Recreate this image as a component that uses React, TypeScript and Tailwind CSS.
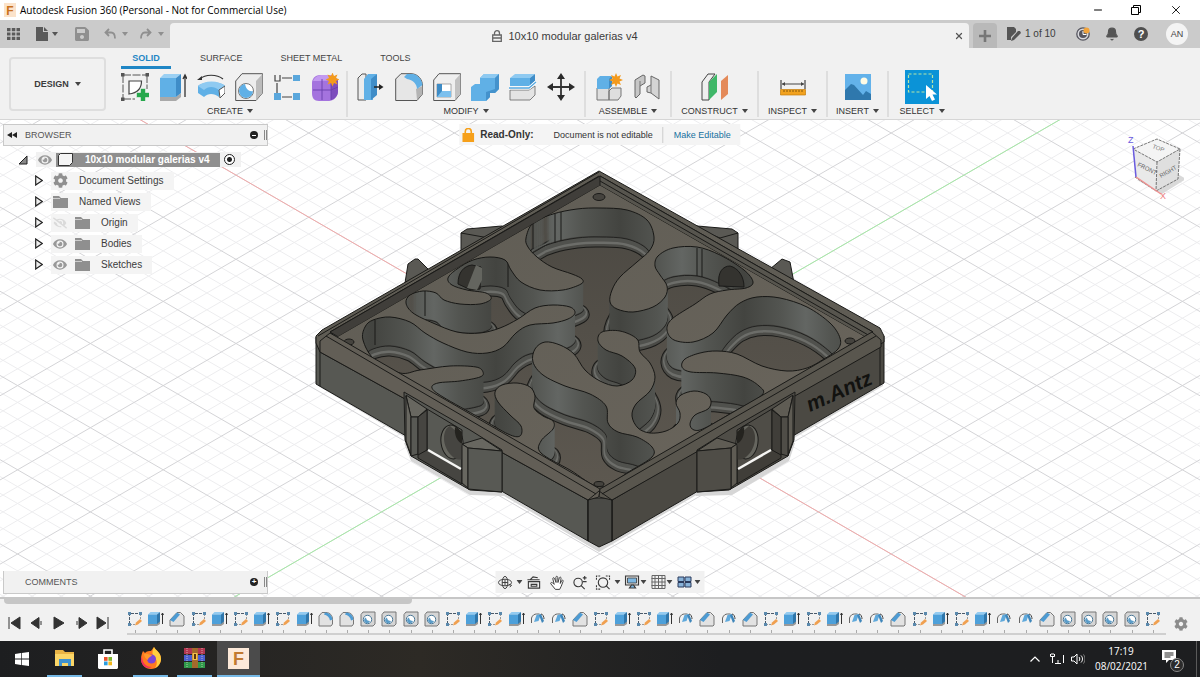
import React from "react";
import { Bell, Minus, X } from "lucide-react";
import { FaCog, FaEye, FaEyeSlash, FaSave } from "react-icons/fa";

type Pt = [number, number];

/* ---------- shared bits ---------- */

function Caret({ className = "text-[#444]" }: { className?: string }) {
  return (
    <svg viewBox="0 0 6 4" className={`h-1 w-1.5 shrink-0 ${className}`} aria-hidden="true">
      <path d="M0 0h6L3 4z" fill="currentColor" />
    </svg>
  );
}

function Art({ children }: { children: React.ReactNode }) {
  return (
    <svg viewBox="0 0 28 28" className="block size-7 shrink-0" aria-hidden="true">
      {children}
    </svg>
  );
}

const star = "M0-7L1.5-3.4 5-5 3.5-1.5 7 0 3.5 1.5 5 5 1.5 3.5 0 7-1.5 3.5-5 5-3.5 1.5-7 0-3.5-1.5-5-5-1.5-3.4z";

/* ---------- ribbon icons ---------- */

const SketchIcon = () => (
  <Art>
    <path d="M2 2h24M2 2v24M26 2v14M2 26h12" stroke="#555" strokeWidth="1" fill="none" strokeDasharray="8 1.5" />
    <path d="M8 8h12.5c0 7-4 12-12.500 13z" stroke="#444" strokeWidth="1.2" fill="#fff" />
    <path d="M0 0h3.500v3.500H0zM24.500 0H28v3.500h-3.500zM0 24.500h3.500V28H0z" fill="#555" />
    <path d="M19.500 15.500h5v4h4v5h-4v4h-5v-4h-4v-5h4z" fill="#27a84d" stroke="#f1f1f1" strokeWidth=".6" />
  </Art>
);
const ExtrudeIcon = () => (
  <Art>
    <path d="M1 24h16l5-4v4l-5 4H1z" fill="#a9a9a9" />
    <path d="M1 5l4-4h17l-5 4z" fill="#9bd0f3" />
    <path d="M1 5h16v19H1z" fill="#60b0e6" />
    <path d="M17 5l5-4v19l-5 4z" fill="#3f8dc8" />
    <path d="M26 24V3M24 6l2-4 2 4" stroke="#333" strokeWidth="1.3" fill="none" />
  </Art>
);
const RevolveIcon = () => (
  <Art>
    <path d="M1 13c3-4 22-6 27 0l-6 4v7c-5-4-11-4-15 0l-6-4z" fill="#60b0e6" />
    <path d="M1 13c6-6 21-6 27 0l-6 4c-5-4-11-4-15 0z" fill="#8fcaf1" />
    <path d="M22 17l6-4v7l-5 5z" fill="#fff" stroke="#555" />
    <path d="M3 6C8 1 20 1 26 6" stroke="#333" strokeWidth="1.2" fill="none" />
    <path d="M0 7l5-4v4z" fill="#333" />
  </Art>
);
const HoleIcon = () => (
  <Art>
    <path d="M.7 8L7 .7h20.500V20L21 27.500H.7z" fill="#ededed" stroke="#555" />
    <path d="M21 8l6.500-7V20L21 27.300z" fill="#bcbcbc" />
    <circle cx="11" cy="18" r="7.5" fill="#fff" stroke="#777" />
    <path d="M10 11a7 7 0 1 0 8 7c-4 1-7-2-8-7z" fill="#60b0e6" />
  </Art>
);
const PatternIcon = () => (
  <Art>
    <path d="M9 5h10M4 10v10M9 24h10" stroke="#444" strokeWidth="1.2" />
    <path d="M2 2v6h5V2" fill="none" stroke="#444" strokeWidth="1.2" />
    <path d="M20 2h7v6h-7zM1 20h7v7H1zM20 20h7v7h-7z" fill="#5aa7dc" />
  </Art>
);
const FormIcon = () => (
  <Art>
    <path d="M1 10c0-4 3-8 8-8h10c5 0 8 4 8 8v8c0 6-5 10-9 10H8c-5 0-7-3-7-8z" fill="#a473de" />
    <path d="M2 8c2-5 6-6 10-6h6c3 0 5 2 6 3-3 3-14 3-22 3z" fill="#c39af0" />
    <path d="M20 8c4 0 7-2 7-1v11c0 5-3 8-7 9z" fill="#7d4dbd" />
    <path d="M11 6v21M2 17h18l7-3M20 7v20" stroke="#6a3eab" strokeWidth=".9" fill="none" />
    <path d={star} transform="translate(21.5 6.5)" fill="#f39a1d" />
  </Art>
);
const PressPullIcon = () => (
  <Art>
    <path d="M1 5l4-4h4v26H1z" fill="#ececec" stroke="#555" />
    <path d="M7 6l4-5h9l-4 5v21H7z" fill="#60b0e6" />
    <path d="M14 6l6-5v21l-6 5z" fill="#3f8dc8" />
    <path d="M17 14h8" stroke="#222" strokeWidth="1.5" />
    <path d="M22 11l4.500 3-4.500 3z" fill="#222" />
  </Art>
);
const FilletIcon = () => (
  <Art>
    <path d="M.7 6L6 .7h10c7 0 11.500 6 11.500 12V21L22 27.500H.7z" fill="#e6e6e6" stroke="#555" />
    <path d="M21 16l6.500-3v8L22 27z" fill="#b3b3b3" />
    <path d="M12 1h5c6 0 10 6 10.500 11L22 16c0-5-4-9-10-10l-3-2z" fill="#60b0e6" />
  </Art>
);
const ShellIcon = () => (
  <Art>
    <path d="M.7 7L6 .7h21.500V21L22 27.500H.7z" fill="#efefef" stroke="#555" />
    <path d="M22 7l5.500-6v20L22 27z" fill="#c2c2c2" />
    <path d="M4 11h14v13H4z" fill="#fff" stroke="#888" strokeWidth=".7" />
    <path d="M4 11h5v13H4z" fill="#3d8bc5" />
    <path d="M9 18h9v6H4z" fill="#7cc0ee" />
  </Art>
);
const CombineIcon = () => (
  <Art>
    <path d="M9 5l4-4h15v15l-4 4h-5v4l-4 4H0V14l4-3h5z" fill="#60b0e6" />
    <path d="M9 5l4-4h15l-4 4z" fill="#8fcaf1" />
    <path d="M24 5l4-4v15l-4 4h-5v4l-4 4V19l9-3z" fill="#4492cc" />
  </Art>
);
const SplitIcon = () => (
  <Art>
    <path d="M1 17h19l6-4v9l-5 5H1z" fill="#e4e4e4" stroke="#666" strokeWidth=".8" />
    <path d="M1 5l5-4h20l-5 4z" fill="#8fcaf1" />
    <path d="M1 5h20v8H1z" fill="#60b0e6" />
    <path d="M21 5l5-4v7l-5 5z" fill="#3f8dc8" />
    <path d="M0 15h20l7-6" stroke="#fff" strokeWidth="3" fill="none" />
    <path d="M0 15h20l7-6" stroke="#55a8df" strokeWidth="1.3" fill="none" />
  </Art>
);
const MoveIcon = () => (
  <Art>
    <path d="M14 3v22M3 14h22" stroke="#333" strokeWidth="1.8" />
    <path d="M14 0l4 6h-8zM14 28l4-6h-8zM0 14l6-4v8zM28 14l-6-4v8z" fill="#2b2b2b" />
  </Art>
);
const ComponentIcon = () => (
  <Art>
    <path d="M2 15h12v12H2zM14 18l3-3h9v8l-3 4h-9z" fill="#dedede" stroke="#777" />
    <path d="M2 6l3-3h11v10l-3 3H2z" fill="#60b0e6" />
    <path d="M14 6l3-3v10l-3 3z" fill="#3f8dc8" />
    <path d={star} transform="translate(21 7)" fill="#f39a1d" />
  </Art>
);
const JointIcon = () => (
  <Art>
    <path d="M2 7l8-5 2 1v7l-5 3v8l-4 4-1-1z" fill="#c6c6c6" stroke="#666" />
    <path d="M26 7l-8-4v9l-4 2v5l4 1 8 6z" fill="#d4d4d4" stroke="#666" />
    <path d="M18 12v8M7 8v5" stroke="#777" />
  </Art>
);
const ConstructIcon = () => (
  <Art>
    <path d="M1 9l6-8h7l-6 8v18H1z" fill="#efefef" stroke="#444" />
    <path d="M8 9l8-8v18l-8 8z" fill="#3fb768" />
    <path d="M20 8l7-6v19l-7 6z" fill="#e48a59" />
  </Art>
);
const InspectIcon = () => (
  <Art>
    <path d="M2 7v9M26 7v9M3 11h22" stroke="#444" strokeWidth="1.2" />
    <path d="M6 9l-3 2 3 2zM22 9l3 2-3 2z" fill="#444" />
    <path d="M1.500 16.500h25V22h-25z" fill="#f2a21f" stroke="#c47d0c" strokeWidth=".7" />
    <path d="M5 17v2M8 17v2M11 17v2M14 17v2M17 17v2M20 17v2M23 17v2" stroke="#6b4405" strokeWidth=".8" />
  </Art>
);
const InsertIcon = () => (
  <Art>
    <path d="M1 1h26v26H1z" fill="#63b2ea" />
    <path d="M1 17l6-6 3 1 9 10 3-4 5 3v6H1z" fill="#2f78ad" />
    <circle cx="20" cy="8" r="3.5" fill="#fffbe5" />
  </Art>
);
const SelectIcon = () => (
  <svg viewBox="0 0 34 34" className="block size-[34px] shrink-0" aria-hidden="true">
    <path d="M0 0h34v34H0z" fill="#0b93d7" />
    <path d="M3.500 4h24v18h-24z" fill="none" stroke="#b7e5a5" strokeWidth="1.2" strokeDasharray="3 2" />
    <path d="M21 15v14l3.500-3 2.500 5 3-1.500-2.500-5H32z" fill="#fff" />
  </svg>
);

interface Group {
  label: string;
  box: string;
  icons: [string, () => React.ReactElement][];
}

const groups: Group[] = [
  {
    label: "CREATE",
    box: "w-[227px] border-r-2 pr-[7px]",
    icons: [
      ["Create Sketch", SketchIcon],
      ["Extrude", ExtrudeIcon],
      ["Revolve", RevolveIcon],
      ["Hole", HoleIcon],
      ["Rectangular Pattern", PatternIcon],
      ["Create Form", FormIcon],
    ],
  },
  {
    label: "MODIFY",
    box: "w-[238px] border-r-2",
    icons: [
      ["Press Pull", PressPullIcon],
      ["Fillet", FilletIcon],
      ["Shell", ShellIcon],
      ["Combine", CombineIcon],
      ["Split Body", SplitIcon],
      ["Move", MoveIcon],
    ],
  },
  {
    label: "ASSEMBLE",
    box: "w-[86px] border-r-2",
    icons: [
      ["New Component", ComponentIcon],
      ["Joint", JointIcon],
    ],
  },
  { label: "CONSTRUCT", box: "w-[87px] border-r-2", icons: [["Offset Plane", ConstructIcon]] },
  { label: "INSPECT", box: "w-[69px] border-r-2", icons: [["Measure", InspectIcon]] },
  { label: "INSERT", box: "w-[61px] border-r-2", icons: [["Insert Image", InsertIcon]] },
  { label: "SELECT", box: "w-[66px]", icons: [["Select", SelectIcon]] },
];

/* ---------- header ---------- */

function TitleBar() {
  return (
    <div className="flex h-5 items-center bg-white pl-1 text-black">
      <svg viewBox="0 0 12 14" className="mr-1 h-3.5 w-3" aria-hidden="true">
        <path d="M0 0h12v14H0z" fill="#fbe3cb" />
        <text x="6" y="11.5" textAnchor="middle" fontFamily="Liberation Sans, sans-serif" fontWeight="700" fontSize="12" fill="#c9701b">F</text>
      </svg>
      <h1 className="flex-1 font-['Open_Sans',sans-serif] text-[10px] leading-5">
        Autodesk Fusion 360 (Personal - Not for Commercial Use)
      </h1>
      <button type="button" aria-label="Minimize" className="flex h-5 w-10 items-center justify-center">
        <Minus className="size-3" strokeWidth={2} />
      </button>
      <button type="button" aria-label="Restore" className="flex h-5 w-9 items-center justify-center">
        <svg viewBox="0 0 10 10" className="size-2.5" fill="none" stroke="#000">
          <path d="M.5 2.500h7v7h-7zM2.500 2V.5h7v7H8" />
        </svg>
      </button>
      <button type="button" aria-label="Close" className="mr-0.5 flex h-5 w-11 items-center justify-center">
        <X className="size-3.5" strokeWidth={1.5} />
      </button>
    </div>
  );
}

function TabBar() {
  return (
    <div className="flex h-7 bg-[#cbcbcb] text-[#555]">
      <div className="flex w-[170px] items-center pl-[7px]">
        <button type="button" aria-label="Show data panel">
          <svg viewBox="0 0 13 12" className="h-3 w-[13px]" fill="#5a5a5a">
            <path d="M0 0h3.500v3.200H0zM4.800 0h3.500v3.200H4.800zM9.500 0H13v3.200H9.500zM0 4.400h3.500v3.200H0zM4.800 4.400h3.500v3.200H4.800zM9.500 4.400H13v3.200H9.500zM0 8.800h3.500V12H0zM4.800 8.800h3.500V12H4.800zM9.500 8.800H13V12H9.500z" />
          </svg>
        </button>
        <button type="button" aria-label="File" className="ml-4 flex items-center gap-1">
          <svg viewBox="0 0 12 14" className="h-3.5 w-3" fill="#5a5a5a">
            <path d="M0 0h7v5h5v9H0zM8 0l4 4H8z" />
          </svg>
          <Caret className="text-[#555]" />
        </button>
        <button type="button" aria-label="Save" className="ml-4 text-[#8f8f8f]">
          <FaSave className="size-4" />
        </button>
        <button type="button" aria-label="Undo" className="ml-3.5 flex items-center gap-1.5 text-[#8f8f8f]">
          <svg viewBox="0 0 12 12" className="size-3" fill="none" stroke="currentColor" strokeWidth="1.8">
            <path d="M5 1L1.500 4.500 5 8M2 4.500h5c3 0 4 3 4 6" />
          </svg>
          <Caret className="text-[#8f8f8f]" />
        </button>
        <button type="button" aria-label="Redo" className="ml-3 flex items-center gap-1.5 text-[#8f8f8f]">
          <svg viewBox="0 0 12 12" className="size-3" fill="none" stroke="currentColor" strokeWidth="1.8">
            <path d="M7 1l3.500 3.500L7 8M10 4.500H5c-3 0-4 3-4 6" />
          </svg>
          <Caret className="text-[#8f8f8f]" />
        </button>
      </div>
      <div className="mt-[3px] flex min-w-0 flex-1 items-center rounded-t bg-[#f1f1f1]">
        <div className="flex flex-1 items-center justify-center gap-1.5 pl-1.5 text-[11px] leading-4 text-[#3c3c3c]">
          <svg viewBox="0 0 10 12" className="h-3 w-2.5" fill="none" stroke="#666" strokeWidth="1.3">
            <path d="M2.500 5V3.200a2.500 2.500 0 0 1 5 0V5M.7 5h8.600v6.300H.7zM1 8h8" />
          </svg>
          10x10 modular galerias v4
        </div>
        <button type="button" aria-label="Close document" className="mr-[5px] text-[#555]">
          <X className="size-2.5" strokeWidth={3} />
        </button>
      </div>
      <div className="flex w-[231px] items-center">
        <button type="button" aria-label="New design" className="mt-[3px] ml-1 flex h-[25px] w-6 items-center justify-center rounded-t bg-[#b9b9b9]">
          <svg viewBox="0 0 12 12" className="size-3" fill="#777">
            <path d="M4.700 0h2.600v4.700H12v2.600H7.300V12H4.700V7.300H0V4.700h4.700z" />
          </svg>
        </button>
        <button type="button" className="ml-2.5 flex items-center gap-1 text-[10px] leading-4 text-[#3c3c3c]">
          <svg viewBox="0 0 14 14" className="size-3.5" fill="#555">
            <path d="M0 0h7l2 2v3L4 10v3H0zM13 4l1 2-7 7-3 1 1-3 6-7z" />
          </svg>
          1 of 10
        </button>
        <div className="ml-auto flex items-center pr-3">
          <button type="button" aria-label="Job status" className="mr-[15px]">
            <svg viewBox="0 0 14 14" className="size-3.5">
              <circle cx="7" cy="7" r="6.2" fill="#d8d8dc" stroke="#55555f" strokeWidth="1.3" />
              <circle cx="7" cy="7" r="4" fill="#55555f" />
              <path d="M7 4v3.500h3.500" stroke="#fff" fill="none" />
              <circle cx="10.5" cy="3.5" r="3" fill="#f2a33a" />
            </svg>
          </button>
          <button type="button" aria-label="Notifications" className="mr-[15px] text-[#555]">
            <Bell className="size-3.5" fill="currentColor" strokeWidth={2} />
          </button>
          <button type="button" aria-label="Help" className="mr-[18px] flex size-3.5 items-center justify-center rounded-full bg-[#4f4f4f] text-[11px] leading-none font-bold text-white">
            ?
          </button>
          <button type="button" aria-label="Account AN" className="flex size-[22px] items-center justify-center rounded-full bg-[#f4f4f4] text-[9px] leading-none text-[#444]">
            AN
          </button>
        </div>
      </div>
    </div>
  );
}

function Ribbon() {
  return (
    <div className="flex h-[72px] border-b border-[#d6d6d6] bg-[#f1f1f1]">
      <button
        type="button"
        className="mt-[9px] ml-[9px] flex h-[54px] w-[97px] items-center justify-center gap-1.5 rounded-sm border-2 border-[#dedede] text-[9px] leading-3 font-bold text-[#3c3c3c]"
      >
        DESIGN <Caret />
      </button>
      <div className="ml-[15px] flex flex-col">
        <nav className="flex h-[21px] items-end text-[9px] leading-4 text-[#444]">
          <a href="#solid" className="mr-2.5 w-[50px] border-b-[3px] border-[#1f86c5] text-center font-bold text-[#1f86c5]">SOLID</a>
          <a href="#surface" className="px-[19px] pb-[3px]">SURFACE</a>
          <a href="#sheet-metal" className="px-[19px] pb-[3px]">SHEET METAL</a>
          <a href="#tools" className="px-[19px] pb-[3px]">TOOLS</a>
        </nav>
        <div className="mt-0.5 flex h-[46px]">
          {groups.map((g) => (
            <section key={g.label} className={`flex flex-col items-center justify-between border-[#dedede] ${g.box}`}>
              <div className="flex h-8 items-center gap-2.5">
                {g.icons.map(([name, Icon]) => (
                  <button key={name} type="button" aria-label={name}>
                    <Icon />
                  </button>
                ))}
              </div>
              <button type="button" className="flex items-center gap-1 text-[9px] leading-3 text-[#333]">
                {g.label} <Caret />
              </button>
            </section>
          ))}
        </div>
      </div>
    </div>
  );
}

/* ---------- viewport ---------- */

const range = (n: number) => Array.from({ length: n }, (_, i) => i);

/* Closed Catmull-Rom curve through the points. */
function smooth(p: Pt[]): string {
  const n = p.length;
  let d = `M${p[0][0]} ${p[0][1]}`;
  for (let i = 0; i < n; i++) {
    const a = p[(i + n - 1) % n];
    const b = p[i];
    const c = p[(i + 1) % n];
    const e = p[(i + 2) % n];
    d += `C${b[0] + (c[0] - a[0]) / 6} ${b[1] + (c[1] - a[1]) / 6} ${c[0] - (e[0] - b[0]) / 6} ${c[1] - (e[1] - b[1]) / 6} ${c[0]} ${c[1]}`;
  }
  return d + "Z";
}

const cavity: Pt[] = [
  [526, 238], [533, 223], [553, 214], [577, 209], [600, 208], [627, 210], [647, 220], [654, 237], [650, 250],
  [637, 262], [620, 277], [612, 290], [610, 302], [617, 309], [633, 312], [653, 307], [665, 297], [667, 286],
  [660, 275], [655, 266], [658, 256], [673, 248], [697, 247], [720, 255], [744, 270], [753, 282], [746, 288],
  [727, 290], [710, 294], [695, 304], [672, 319], [667, 330], [674, 340], [693, 342], [713, 333], [727, 315],
  [740, 303], [757, 297], [780, 298], [807, 307], [830, 323], [840, 338], [838, 349], [824, 359], [807, 368],
  [787, 371], [762, 366], [737, 354], [717, 351], [700, 353], [685, 359], [682, 367], [691, 372], [717, 373],
  [743, 377], [759, 386], [762, 395], [735, 411], [705, 428], [694, 430], [690, 424], [695, 415], [708, 409],
  [711, 401], [706, 394], [694, 391], [681, 395], [676, 403], [680, 413], [678, 423], [666, 431], [650, 433],
  [638, 428], [632, 416], [636, 404], [650, 391], [655, 377], [650, 363], [640, 352], [637, 339], [620, 331],
  [602, 332], [598, 341], [606, 350], [622, 356], [635, 368], [632, 380], [617, 386], [600, 381], [585, 370],
  [574, 354], [560, 345], [545, 342], [535, 349], [533, 362], [543, 375], [565, 386], [590, 394], [606, 406],
  [608, 423], [618, 432], [637, 437], [652, 447], [652, 457], [630, 471], [601, 487], [570, 470], [541, 453],
  [541, 441], [553, 429], [553, 421], [543, 416], [534, 408], [535, 396], [530, 387], [517, 383], [502, 385],
  [495, 392], [498, 402], [510, 415], [521, 426], [520, 436], [508, 434], [480, 418], [443, 397], [432, 388],
  [438, 383], [460, 381], [480, 377], [483, 372], [476, 367], [450, 366], [420, 370], [400, 373], [374, 359],
  [363, 340], [365, 327], [373, 320], [390, 317], [410, 322], [425, 333], [443, 343], [467, 352], [487, 353],
  [503, 347], [516, 333], [530, 325], [553, 323], [568, 319], [575, 313], [570, 307], [553, 305], [535, 308],
  [518, 319], [500, 328], [480, 333], [457, 332], [433, 323], [413, 313], [406, 303], [410, 295], [423, 291],
  [436, 293], [444, 300], [460, 304], [480, 304], [491, 299], [486, 293], [467, 290], [452, 285], [448, 278],
  [457, 269], [473, 260], [490, 257], [505, 260], [511, 270], [521, 282], [540, 290], [563, 290], [581, 284],
  [582, 279], [572, 274], [552, 267], [537, 257], [528, 247],
];

const plate = `M600 185L335 338 600 491 866 337Z${smooth(cavity)}`;

function Grid() {
  const at = range(121).map((i) => i - 60);
  return (
    <g fill="none">
      {[false, true].map((major) => (
        <g key={String(major)} stroke={major ? "#d4d4d7" : "#ededef"}>
          {at
            .filter((k) => (k % 5 === 0) === major)
            .map((k) => {
              const x = 600 + k * 29.12;
              return <path key={k} d={`M${x - 728} ${385.6 + 421}L${x + 728} ${385.6 - 421}M${x - 728} ${385.6 - 421}L${x + 728} ${385.6 + 421}`} />;
            })}
        </g>
      ))}
      <path d="M-128 -35.400L1328 806.600" stroke="#f2aaaa" />
      <path d="M-128 806.600L1328 -35.400" stroke="#a6eaa6" />
    </g>
  );
}

/* Connector on a front wall, drawn for the left side. */
function Connector({ light, mid, dark }: { light: string; mid: string; dark: string }) {
  return (
    <g stroke="#1b1b19" strokeLinejoin="round">
      <path d="M404 392L405 440 411 456 463 486 470 490 502 492V450L470 430z" fill={mid} />
      <path d="M427 409L462 430V470L427 450z" fill={mid} />
      <ellipse cx="452" cy="442" rx="11" ry="17" fill="#66665f" transform="rotate(-8 452 442)" />
      <path d="M450 426c-8 3-9 21 3 31 4 3 7 3 9 2v-12l-4-14z" fill={dark} stroke="none" />
      <path d="M455 427l7 5v12c-5-3-8-9-7-17z" fill="#24231f" stroke="none" />
      <path d="M427 450l35 20v14l-44-26v-6z" fill={dark} />
      <path d="M428 450l33 19" stroke="#f6f6f4" strokeWidth="2.5" />
      <path d="M406 395l21 14-9 8h-7z" fill={light} />
      <path d="M406 396l5 21v38l-5-14z" fill={light} />
      <path d="M411 417h7v37l-7 2z" fill={mid} />
      <path d="M418 417l9-7v40l-9 5z" fill={dark} />
      <path d="M462 444l20-6 20 13-34-3z" fill={light} />
      <path d="M462 444l6 4v40l-6-5z" fill={light} />
      <path d="M468 448l34 3v41l-34-3z" fill={mid} />
    </g>
  );
}

function Model() {
  return (
    <g>
      <defs>
        <path id="plate" d={plate} fillRule="evenodd" />
        <clipPath id="inside">
          <path d="M600 185L335 338 600 491 866 337Z" />
        </clipPath>
        <linearGradient id="wall" gradientUnits="userSpaceOnUse" x1="0" y1="0" x2="62" y2="0" spreadMethod="reflect">
          <stop offset="0" stopColor="#434440" />
          <stop offset=".6" stopColor="#535551" />
          <stop offset="1" stopColor="#636663" />
        </linearGradient>
        <linearGradient id="floor" x1="0" y1="0" x2="0" y2="1">
          <stop offset="0" stopColor="#4a4741" />
          <stop offset="1" stopColor="#5d5850" />
        </linearGradient>
        <linearGradient id="top" x1="0" y1="0" x2="1" y2="1">
          <stop offset="0" stopColor="#5f5c54" />
          <stop offset="1" stopColor="#6a655c" />
        </linearGradient>
      </defs>
      <path d="M318 386L599 552 883 386V380H318z" fill="#d6d6d6" />
      <path d="M404 443l7 18 59 34 36 1 12-20H690l6 20 36-1 57-34 6-18z" fill="#d6d6d6" />

      <g fill="#5a5954" stroke="#1b1b19" strokeLinejoin="round">
        <path d="M461 252V233l6-4 35-3 10 4-40 30z" />
        <path d="M461 233l28 5 23-10" fill="none" />
        <path d="M405 283l3-19 7-5h3l14 14-20 16z" />
        <path d="M738 252V233l-6-4-35-3-10 4 40 30z" />
        <path d="M738 233l-18 5-28-11" fill="none" />
        <path d="M794 283l-4-21-8-3-12 10 12 14z" />
      </g>

      {/* outer block */}
      <g stroke="#1b1b19" strokeLinejoin="round">
        <path d="M316 337V384L588 541V500z" fill="#575853" />
        <path d="M884 336V383L612 541V500z" fill="#4b4943" />
        <path d="M588 498V541L599 547 612 541V498z" fill="#4a4a46" />
        <path d="M320 343v43M880 342v43" fill="none" />
        <path d="M599 171L880 328l4 8v6L612 500l-13-5-11 5L320 352l-4-9v-7l6-6z" fill="#5f5c54" />
        <path d="M599 172L318 336M599 176L330 332l5 5" fill="none" />
        <path d="M330 332L600 176 873 332 600 491z" fill="#403e3a" />
        <path d="M600 176L873 332l-7 6L600 186z" fill="#57554e" />
        <path d="M600 181L870 336" fill="none" />
      </g>

      {/* interior */}
      <g clipPath="url(#inside)">
        <path d="M600 185L335 338 600 491 866 337Z" fill="url(#floor)" />
        <g strokeLinejoin="round">
          <use href="#plate" y="33" fill="#4a4a46" stroke="#1b1b19" strokeWidth="13" />
          <use href="#plate" y="33" fill="#4a4a46" stroke="#4b4b47" strokeWidth="11" />
          <use href="#plate" y="32" fill="#4a4a46" stroke="#6c6d69" strokeWidth="8" />
          <use href="#plate" y="31" fill="#4a4a46" stroke="#50514d" strokeWidth="5" />
        </g>
        <use href="#plate" y="29" fill="#41413e" stroke="#232321" />
        {range(28).map((i) => (
          <use key={i} href="#plate" y={28 - i} fill="url(#wall)" />
        ))}
        <g stroke="#1b1b19" fill="none">
          <path d="M533 223v26M555 214v29M561 212v29M375 320v25M425 291v25M508 262v25M697 248v28M702 249v28" />
        </g>
        <path d="M458 284c0-12 6-18 14-19l9 2-1 22-9 1z" fill="#34332f" stroke="#1b1b19" />
        <path d="M467 288l9-23 6 3v12l-5 10z" fill="#64655f" />
        <path d="M719 286c-2-14 4-20 11-20 8 2 14 10 14 21z" fill="#34332f" stroke="#1b1b19" />
        <use href="#plate" fill="url(#top)" stroke="#181816" />
      </g>
      <g fill="#45433e" stroke="#1b1b19">
        <ellipse cx="599" cy="197" rx="6" ry="3.5" />
        <ellipse cx="349" cy="342" rx="5" ry="3" />
        <ellipse cx="850" cy="341" rx="5" ry="3" />
        <ellipse cx="599" cy="484" rx="5" ry="2.5" />
      </g>

      {/* front rim */}
      <g stroke="#1b1b19" strokeLinejoin="round">
        <path d="M320 341l10-8L600 489l-1 8-11 3L320 352z" fill="#625e56" />
        <path d="M881 340l-9-8L600 489l-1 8 13 3L881 347z" fill="#59564e" />
        <path d="M326 336L596 494M876 336L602 494M588 500l11-9 13 9M588 500v41M612 500v41" fill="none" />
      </g>

      <Connector light="#686760" mid="#585954" dark="#464541" />
      <g transform="translate(1199 0) scale(-1 1)">
        <Connector light="#5f5c54" mid="#4f4d47" dark="#403e39" />
      </g>
      <text x="810" y="412" transform="rotate(-24 810 412)" fontFamily="Liberation Sans, sans-serif" fontStyle="italic" fontWeight="700" fontSize="21" fill="#121210">
        m.Antz
      </text>
    </g>
  );
}

function ViewCube() {
  return (
    <svg viewBox="0 0 60 70" className="absolute top-3 right-4 h-[70px] w-[60px]" role="img" aria-label="View cube" fontFamily="Liberation Sans, sans-serif">
      <path d="M13 48l25 14 24-15-10-6z" fill="#d9d9d9" />
      <path d="M9 17L33 7l23 10-23 13z" fill="#f4f4f4" />
      <path d="M9 17l24 13-1 29L11 45z" fill="#e9e9e9" />
      <path d="M33 30l23-13-2 30-22 12z" fill="#dfdfdf" />
      <path d="M9 17L33 7l23 10-23 13zM33 30l-1 29L11 45M56 17l-2 30-22 12" fill="none" stroke="#666" strokeWidth=".9" strokeDasharray="3 1" />
      <path d="M9 14l3 31" stroke="#6a5be0" strokeWidth="1.5" />
      <path d="M12 45l25 17" stroke="#ef8f8f" strokeWidth="1.5" />
      <text x="4" y="11" fontSize="9" fill="#6a5be0">Z</text>
      <text x="36" y="67" fontSize="9" fill="#ef7f7f">X</text>
      <text x="28" y="16" fontSize="6" fill="#777" transform="rotate(20 28 16)">TOP</text>
      <text x="13" y="34" fontSize="6" fill="#666" transform="rotate(26 13 34)">FRONT</text>
      <text x="37" y="46" fontSize="6" fill="#666" transform="rotate(-30 37 46)">RIGHT</text>
    </svg>
  );
}

interface Node {
  label: string;
  eye?: "on" | "off";
  icon: "gear" | "folder";
}
const nodes: Node[] = [
  { label: "Document Settings", icon: "gear" },
  { label: "Named Views", icon: "folder" },
  { label: "Origin", eye: "off", icon: "folder" },
  { label: "Bodies", eye: "on", icon: "folder" },
  { label: "Sketches", eye: "on", icon: "folder" },
];

function FolderIcon() {
  return (
    <svg viewBox="0 0 15 12" className="h-3 w-[15px] shrink-0" fill="#8f8f8f" aria-hidden="true">
      <path d="M0 0h6l2 2h7v10H0z" />
      <path d="M0 2.500h7" stroke="#ddd" strokeWidth=".8" />
    </svg>
  );
}

function Browser() {
  return (
    <aside className="absolute top-1 left-[3px] w-[265px] text-[10px] leading-4 text-[#3c3c3c]">
      <div className="flex h-[22px] items-center border border-[#c9c9c9] bg-[#f1f1f1] pl-[3px]">
        <button type="button" aria-label="Collapse browser">
          <svg viewBox="0 0 10 6" className="h-1.5 w-2.5" fill="#222">
            <path d="M5 0v6L0 3zM10 0v6L5 3z" />
          </svg>
        </button>
        <h2 className="ml-2 flex-1 text-[9px] text-[#555]">BROWSER</h2>
        <button type="button" aria-label="Browser options" className="flex size-2 items-center justify-center rounded-full bg-[#222]">
          <span className="h-px w-1 bg-white" />
        </button>
        <span className="ml-1.5 h-2.5 w-[3px] border-x border-[#888]" />
      </div>
      <div className="mt-[3px] flex h-[21px] items-center pl-[15px]">
        <button type="button" aria-label="Collapse document" className="mr-2">
          <svg viewBox="0 0 10 10" className="size-2.5">
            <path d="M9 1v8H1z" fill="#888" stroke="#222" />
          </svg>
        </button>
        <div className="flex h-[15px] items-center bg-[#f1f1f1] pr-1.5">
          <FaEye className="mx-0.5 size-3.5 text-[#999]" />
          <span className="ml-0.5 flex h-3.5 items-center bg-[#8f8f8f] px-0.5">
            <svg viewBox="0 0 15 13" className="mr-3 h-[13px] w-[15px]">
              <path d="M.5 2.500l2-2h12v9l-3 3H.5z" fill="#f4f4f4" stroke="#333" />
            </svg>
            <span className="pr-2 font-bold text-white">10x10 modular galerias v4</span>
          </span>
          <input
            type="radio"
            defaultChecked
            aria-label="Activate component"
            className="ml-1 size-[11px] appearance-none rounded-full border border-[#222] bg-[radial-gradient(circle,#222_0_2px,#fff_3px)]"
          />
        </div>
      </div>
      <ul>
        {nodes.map((n) => (
          <li key={n.label} className="flex h-[21px] items-center pl-8">
            <button type="button" aria-label={`Expand ${n.label}`} className="mr-2">
              <svg viewBox="0 0 8 11" className="h-[11px] w-2">
                <path d="M.7 1v9L7.300 5.500z" fill="#eee" stroke="#222" strokeWidth="1.2" />
              </svg>
            </button>
            <div className="flex h-[18px] items-center bg-[#f4f4f4] px-0.5 pr-2.5">
              {n.eye === "on" && <FaEye className="mr-2 size-3.5 text-[#999]" />}
              {n.eye === "off" && <FaEyeSlash className="mr-2 size-3.5 text-[#dadada]" />}
              {n.icon === "gear" ? <FaCog className="size-[15px] text-[#909090]" /> : <FolderIcon />}
              <span className="ml-[11px]">{n.label}</span>
            </div>
          </li>
        ))}
      </ul>
    </aside>
  );
}

function NavBar() {
  const ink = "#3a3a3a";
  return (
    <div className="absolute bottom-1 left-1/2 flex h-[22px] -translate-x-1/2 items-center bg-[#f1f1f1] pr-1 pl-0.5" role="toolbar" aria-label="Navigation">
      <button type="button" aria-label="Orbit" className="flex items-center gap-1">
        <svg viewBox="0 0 16 16" className="size-[15px]" fill="none" stroke={ink}>
          <ellipse cx="8" cy="8" rx="7" ry="3.5" />
          <ellipse cx="8" cy="8" rx="3" ry="6.5" />
          <path d="M8 5v6M5 8h6M12 10l3 1-2 2" />
        </svg>
        <Caret />
      </button>
      <button type="button" aria-label="Look at" className="ml-1">
        <svg viewBox="0 0 16 16" className="size-[15px]" fill="none" stroke={ink} strokeWidth="1.2">
          <path d="M2 7h12v7H2zM5 10h6v2H5zM1 5h13M4 5l3-3 5 1" />
        </svg>
      </button>
      <button type="button" aria-label="Pan" className="ml-2">
        <svg viewBox="0 0 16 16" className="size-[15px]" fill="#fff" stroke={ink} strokeLinejoin="round" strokeLinecap="round">
          <path d="M6 15L1.500 9.500c-.8-1.500 1-2 2-1L5 10 3.500 4c0-1.500 1.500-1.500 2 0L7 8 6.800 2.500c.2-1.500 1.700-1.500 2 0L9 8l1.500-5c.6-1.200 2-.8 1.800.5L11.500 9l1.500-3c.8-1 2-.4 1.500.8L12.500 12l-1.500 3z" />
        </svg>
      </button>
      <button type="button" aria-label="Zoom" className="ml-2">
        <svg viewBox="0 0 16 16" className="size-[15px]" fill="none" stroke={ink} strokeWidth="1.2">
          <circle cx="6" cy="8" r="4.5" />
          <path d="M9 11l4 4M11 3h4M13 1v4M11 7h4" />
        </svg>
      </button>
      <button type="button" aria-label="Fit" className="ml-2 flex items-center gap-1">
        <svg viewBox="0 0 16 16" className="size-[15px]" fill="none" stroke={ink} strokeWidth="1.2">
          <path d="M1 5V1h4M11 1h4v4M1 11v4h4" strokeDasharray="2 1" />
          <circle cx="8" cy="8" r="5" />
          <path d="M11.500 11.500L15 15" />
        </svg>
        <Caret />
      </button>
      <button type="button" aria-label="Display settings" className="ml-1 flex items-center">
        <svg viewBox="0 0 16 16" className="size-4" fill="#7db7e2" stroke={ink} strokeWidth="1.2">
          <path d="M1 2h13v9H1z" fill="#e8e8e8" />
          <path d="M3 4h9v5H3z" strokeWidth=".8" />
          <path d="M5 14h6l-2-3H7z" />
        </svg>
        <Caret />
      </button>
      <button type="button" aria-label="Grid and snaps" className="ml-1 flex items-center">
        <svg viewBox="0 0 16 16" className="size-4" fill="none" stroke="#666">
          <path d="M1.500 1.500h13v13h-13zM4.500 1v14M8 1v14M11.500 1v14M1 4.500h14M1 8h14M1 11.500h14" />
        </svg>
        <Caret />
      </button>
      <button type="button" aria-label="Viewports" className="ml-1 flex items-center gap-0.5">
        <svg viewBox="0 0 16 16" className="size-4" fill="#88b2d8" stroke="#2a3a5c">
          <path d="M1.500 3h6v4.500h-6zM8.500 3h6v4.500h-6zM1.500 8.500h6V13h-6zM8.500 8.500h6V13h-6z" />
        </svg>
        <Caret />
      </button>
    </div>
  );
}

function Viewport() {
  return (
    <main className="relative min-h-[477px] flex-1 overflow-hidden bg-white">
      <svg viewBox="0 120 1200 477" preserveAspectRatio="xMidYMid slice" className="absolute inset-0 size-full" role="img" aria-label="3D model of a modular gallery tile">
        <Grid />
        <Model />
      </svg>
      <Browser />
      <div className="absolute top-1 left-1/2 flex h-[21px] -translate-x-1/2 items-center bg-[#f4f4f4] text-[9px] leading-4 whitespace-nowrap text-[#333]">
        <svg viewBox="0 0 12 14" className="mr-1.5 ml-[3px] h-3.5 w-3" fill="#f6a01a" aria-hidden="true">
          <path d="M0 5h12v9H0z" />
          <path d="M3 6V3.500a3 3 0 0 1 6 0V6" fill="none" stroke="#f6a01a" strokeWidth="1.6" />
        </svg>
        <strong className="mr-5 text-[10px]">Read-Only:</strong>
        <span className="pr-2.5">Document is not editable</span>
        <a href="#make-editable" className="border-l border-[#ccc] px-2.5 text-[#17719f]">Make Editable</a>
      </div>
      <ViewCube />
      <div className="absolute bottom-[3px] left-[3px] flex h-[23px] w-[265px] items-center border-x border-b border-[#c9c9c9] bg-[#f1f1f1]">
        <h2 className="ml-[21px] flex-1 text-[9px] leading-4 text-[#555]">COMMENTS</h2>
        <button type="button" aria-label="Add comment" className="flex size-2 items-center justify-center rounded-full bg-[#222] text-[8px] leading-none font-bold text-white">
          +
        </button>
        <span className="ml-1.5 h-2.5 w-[3px] border-x border-[#888]" />
      </div>
      <NavBar />
    </main>
  );
}

/* ---------- timeline ---------- */

const feature: Record<string, { name: string; art: React.ReactNode }> = {
  s: {
    name: "Sketch",
    art: (
      <>
        <path d="M2.500 13V2.500H13" fill="none" stroke="#4a5a6a" strokeDasharray="3 1" />
        <path d="M3 13.500h6M13.500 3v5" stroke="#9a9a9a" strokeDasharray="2 1" />
        <path d="M1 1h3v3H1zM12 1h3v3h-3zM1 12h3v3H1z" fill="#5a89ad" />
        <path d="M8 14.500l1-3L13 8l2 2-4 3.500z" fill="#f0a050" />
      </>
    ),
  },
  e: {
    name: "Extrude",
    art: (
      <>
        <path d="M0 12h9l3-2v3l-3 2H0z" fill="#999" />
        <path d="M0 3.500L2.500 1H12L9 3.500z" fill="#93cbf1" />
        <path d="M0 3.500h9V13H0z" fill="#4da0da" />
        <path d="M9 3.500L12 1v9.500L9 13z" fill="#2f76aa" />
        <path d="M14.500 13V2M13.500 4l1-2 1 2" stroke="#333" fill="none" />
      </>
    ),
  },
  c: {
    name: "Chamfer",
    art: (
      <>
        <path d="M1 9l7-7.500h3.500L15 5v9l-1 1H1z" fill="#e2e2e2" stroke="#777" />
        <path d="M1 9l7-7.500 3 2L4.500 11z" fill="#4d9bd3" />
      </>
    ),
  },
  f: {
    name: "Fillet",
    art: (
      <>
        <path d="M1 5l3-3.500h4c4 0 6.500 3 6.500 7V13L13 15H1z" fill="#e2e2e2" stroke="#777" />
        <path d="M7 1.500c4 0 7 3 7.500 7L12 9.500C11.500 6 9 4 6 3.500z" fill="#4d9bd3" />
      </>
    ),
  },
  h: {
    name: "Hole",
    art: (
      <>
        <path d="M1 3.500L3 1h12v12l-2 2H1z" fill="#d5d5d5" stroke="#777" />
        <circle cx="7.500" cy="8.500" r="4.200" fill="#fff" stroke="#4a7796" />
        <path d="M6 6.500a3 3 0 1 0 4 3.500c-2 0-4-1-4-3.500z" fill="#5a9cc8" />
      </>
    ),
  },
  m: {
    name: "Press Pull",
    art: (
      <>
        <path d="M1.500 12V7c1-3 3-4 5-4h3" fill="none" stroke="#666" />
        <path d="M4 11l2.500-7 4.500-1-2.500 7z" fill="#5fa9dc" />
        <path d="M9 4l2-1 3 7-2 2z" fill="#3f86ba" />
        <path d="M11 3c2 0 3 3 3 5" fill="none" stroke="#444" />
      </>
    ),
  },
};
const history = "secseseseffhhhhsesemmcsesemcmcsesemmcsesemmchhhhs".split("");

function Timeline() {
  return (
    <footer className="flex h-11 flex-col bg-[#f1f1f1]">
      <div className="h-[7px] border-t-2 border-[#c6c6c6]">
        <div className="ml-1 h-[5px] w-[34%] rounded-b bg-[#c6c6c6]" />
      </div>
      <div className="flex flex-1 items-start">
        <div className="flex w-[127px] items-center gap-[9px] pt-3 pl-2">
          {[
            ["Go to start", "M1 1v12M12 1v12L3 7z"],
            ["Step back", "M9 1.500v11L1 7zM11 5v4"],
            ["Play", "M2 1v12l10-6z"],
            ["Step forward", "M5 1.500v11L13 7zM3 5v4"],
            ["Go to end", "M12 1v12M1 1v12l9-6z"],
          ].map(([name, d]) => (
            <button key={name} type="button" aria-label={name}>
              <svg viewBox="0 0 13 14" className="h-3.5 w-[13px]" fill="#333" stroke="#333" strokeWidth="1">
                <path d={d} strokeLinejoin="round" />
              </svg>
            </button>
          ))}
        </div>
        <ol className="flex min-w-0 flex-1 pt-[7px]">
          {history.map((k, i) => (
            <li key={i} className="flex flex-1 flex-col border-b-2 border-[#cfcfcf]">
              <button type="button" aria-label={feature[k].name}>
                <svg viewBox="0 0 16 16" className="block size-4">{feature[k].art}</svg>
              </button>
              <span className="mt-[3px] ml-2 h-[3px] w-px bg-[#aaa]" />
            </li>
          ))}
        </ol>
        <button type="button" aria-label="Timeline settings" className="mt-[13px] mr-3 ml-2 text-[#8c8c8c]">
          <FaCog className="size-3.5" />
        </button>
      </div>
    </footer>
  );
}

/* ---------- taskbar ---------- */

function TaskButton({ label, state = "", children }: { label: string; state?: string; children: React.ReactNode }) {
  return (
    <button type="button" aria-label={label} className={`flex h-9 w-[43px] items-center justify-center ${state}`}>
      {children}
    </button>
  );
}

function Taskbar() {
  return (
    <div className="flex h-9 items-center bg-linear-to-r from-[#1d1e20] via-[#2d2a25] via-35% to-[#1d1e20] to-60% text-white">
      <TaskButton label="Start">
        <svg viewBox="0 0 14 14" className="size-3.5" fill="#fff">
          <path d="M0 2l6-1v5.600H0zM6.700.9L14 0v6.600H6.700zM0 7.400h6V13l-6-1zM6.700 7.400H14V14l-7.300-1z" />
        </svg>
      </TaskButton>
      <TaskButton label="File Explorer">
        <span className="flex h-9 w-[35px] items-center justify-center border-b-2 border-[#76b9e6]">
          <svg viewBox="0 0 20 18" className="h-[18px] w-5">
            <path d="M0 1h8l2 2h9v14H0z" fill="#e9b445" />
            <path d="M0 5h19v12H0z" fill="#fbd667" />
            <path d="M4 10h12v7h-3v-3H7v3H4z" fill="#3f92cf" />
          </svg>
        </span>
      </TaskButton>
      <TaskButton label="Microsoft Store">
        <svg viewBox="0 0 22 22" className="size-[22px]">
          <path d="M7 7V2h8v5" fill="none" stroke="#fff" strokeWidth="1.6" />
          <path d="M1 6h20v14l-1 1H2l-1-1z" fill="#fff" />
          <path d="M7 9h3.600v3.800H7z" fill="#e8502a" />
          <path d="M11.400 9H15v3.800h-3.600z" fill="#7db52c" />
          <path d="M7 13.500h3.600v3.800H7z" fill="#2a9de0" />
          <path d="M11.400 13.500H15v3.800h-3.600z" fill="#f5b81c" />
        </svg>
      </TaskButton>
      <TaskButton label="Firefox">
        <span className="flex h-9 w-[35px] items-center justify-center border-b-2 border-[#76b9e6]">
          <svg viewBox="0 0 22 22" className="size-[22px]">
            <path d="M3 4l2 2c2-2 4-2 6-2l3-4c1 3 7 5 7 12 0 5-4 10-10 10S1 17 1 12c0-3 1-6 2-8z" fill="#ff7a1f" />
            <path d="M14 0c1 3 7 5 7 12 0 4-3 8-6 9 3-4 2-9-1-11-2-2-2-6 0-10z" fill="#ffcf3f" />
            <path d="M2 9c0 8 5 11 10 11-5 3-11-1-11-8z" fill="#f0305e" />
            <circle cx="11.5" cy="12" r="4.5" fill="#7a45d6" />
            <path d="M4 7c4-1 5 1 8 1-1 2-4 2-4 5-2-1-4-3-4-6z" fill="#ff9a2b" />
          </svg>
        </span>
      </TaskButton>
      <TaskButton label="WinRAR">
        <span className="ml-0.5 flex h-9 w-[35px] items-center justify-center border-b-2 border-[#76b9e6]">
          <svg viewBox="0 0 22 20" className="h-5 w-[22px]">
            <path d="M0 0h21v6H0z" fill="#b33650" />
            <path d="M0 7h21v6H0z" fill="#4a5ed0" />
            <path d="M0 14h21v6H0z" fill="#2f9a4a" />
            <path d="M8 0h6v20H8z" fill="#a36a2c" />
            <path d="M8.500 5h5v7h-5z" fill="#f2c14a" />
            <path d="M10 6h2v5h-2z" fill="#5a3510" />
            <path d="M3 0v20M18 0v20" stroke="#e8e0d0" strokeWidth=".7" strokeDasharray="1 1" />
          </svg>
        </span>
      </TaskButton>
      <TaskButton label="Autodesk Fusion 360" state="ml-0.5 border-b-2 border-[#76b9e6] bg-[#4b4b4b]">
        <svg viewBox="0 0 21 21" className="size-[21px]">
          <path d="M0 0h21v21H0z" fill="#fce9d9" />
          <text x="10.5" y="17" textAnchor="middle" fontFamily="Liberation Sans, sans-serif" fontWeight="700" fontSize="18" fill="#c2792f">F</text>
        </svg>
      </TaskButton>
      <div className="ml-auto flex items-center">
        <button type="button" aria-label="Show hidden icons" className="mr-2.5">
          <svg viewBox="0 0 10 6" className="h-1.5 w-2.5" fill="none" stroke="#fff" strokeWidth="1.2">
            <path d="M.5 5.500L5 1l4.500 4.500" />
          </svg>
        </button>
        <button type="button" aria-label="Network" className="mr-1.5">
          <svg viewBox="0 0 15 12" className="h-3 w-[15px]" fill="none" stroke="#fff">
            <path d="M.5 1v2.500h4V1M2.500 3.500V10M1 1h3M5 10.500h6M8 7v3M13.500 2v8" />
          </svg>
        </button>
        <button type="button" aria-label="Volume" className="mr-2.5">
          <svg viewBox="0 0 14 12" className="h-3 w-3.5" fill="none" stroke="#fff">
            <path d="M.5 4v4H3l3 3V1L3 4zM8 4c1 1 1 3 0 4M10 2.500c2 2 2 5 0 7" />
            <path d="M12.500 1.500c2 3 2 6 0 9" stroke="#888" />
          </svg>
        </button>
        <time className="w-[52px] text-center font-['Open_Sans',sans-serif] text-[10px] leading-[15px]">
          17:19
          <br />
          08/02/2021
        </time>
        <button type="button" aria-label="2 new notifications" className="relative ml-[15px] mr-3 size-[22px]">
          <svg viewBox="0 0 14 13" className="mb-1.5 h-[13px] w-3.5" fill="#fff">
            <path d="M0 0h14v10H7l-3 3v-3H0z" />
            <path d="M2.500 3h9M2.500 5h9M2.500 7h6" stroke="#222" />
          </svg>
          <span className="absolute right-0 -bottom-0.5 flex size-3.5 items-center justify-center rounded-full border border-[#888] bg-[#2b2b2b] text-[10px] leading-none">2</span>
        </button>
        <span className="mr-[3px] h-9 w-px bg-[#5a5a5a]" />
      </div>
    </div>
  );
}

export default function App() {
  return (
    <div className="flex min-h-screen flex-col overflow-hidden bg-white font-['Liberation_Sans',Arial,sans-serif]">
      <header>
        <TitleBar />
        <TabBar />
        <Ribbon />
      </header>
      <Viewport />
      <Timeline />
      <Taskbar />
    </div>
  );
}
